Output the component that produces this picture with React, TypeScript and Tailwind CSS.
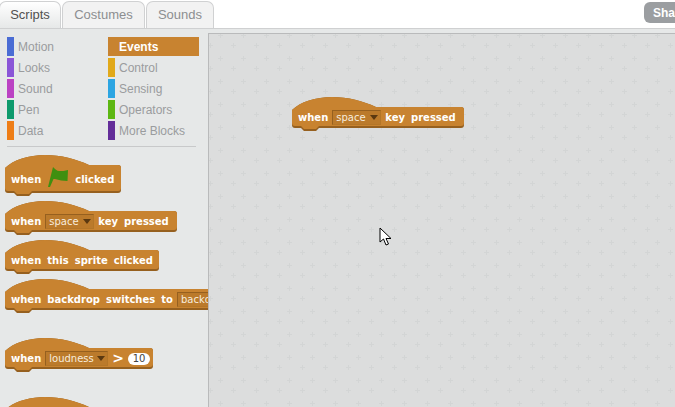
import React from "react";

function BlockShape({ w, h }: { w: number; h: number }) {
  const path = (b: number) =>
    `M0,13 C8,5 24,0 40,0 C56,0 71,4 84,10 H${w - 3} Q${w},10 ${w},13 V${b - 3} Q${w},${b} ${w - 3},${b} H27 L24,${b + 3} H12 L9,${b} H3 Q0,${b} 0,${b - 3} Z`;
  return (
    <svg className="absolute left-0 top-0" width={w} height={h + 4} viewBox={`0 0 ${w} ${h + 4}`}>
      <path d={path(h)} fill="#96601f" />
      <path d={path(h - 2)} fill="#c88330" />
    </svg>
  );
}

function Block({ w, h, className, children }: { w: number; h: number; className?: string; children?: React.ReactNode }) {
  return (
    <div className={`relative shrink-0 ${className ?? ""}`} style={{ width: w, height: h + 4 }}>
      <BlockShape w={w} h={h} />
      <div
        className="relative flex items-center whitespace-nowrap pl-[6px] font-['DejaVu_Sans',sans-serif] text-[10px] font-bold text-white [word-spacing:2.6px]"
        style={{ height: h - 2, paddingTop: 12 }}
      >
        {children}
      </div>
    </div>
  );
}

function Dropdown({ label, w }: { label: string; w: number }) {
  return (
    <span
      className="flex h-[15px] shrink-0 items-center justify-between border-l border-t border-b border-r border-t-[#96601f] border-l-[#96601f] border-b-[#b47628] border-r-[#b47628] bg-[#bb7a2b] pl-[3px] pr-[2px] font-['DejaVu_Sans',sans-serif] text-[10px] font-normal text-[#f7ecdd]"
      style={{ width: w }}
    >
      <span>{label}</span>
      <svg width="8" height="5" viewBox="0 0 8 5"><path d="M0,0 H8 L4,5 Z" fill="#5a3810" /></svg>
    </span>
  );
}

const cats: [string, string, string, string][] = [
  ["Motion", "#4a6cd4", "Events", "#c88330"],
  ["Looks", "#8a55d7", "Control", "#e1a91a"],
  ["Sound", "#bb42c3", "Sensing", "#2ca5e2"],
  ["Pen", "#0e9a6c", "Operators", "#5cb712"],
  ["Data", "#ee7d16", "More Blocks", "#632d99"],
];

function Cat({ name, color }: { name: string; color: string }) {
  if (name === "Events") {
    return (
      <div className="flex h-[19px] w-[91px] items-center bg-[#c88330] pl-[11px] text-[12px] font-bold text-white">
        {name}
      </div>
    );
  }
  return (
    <div className="flex h-[19px] w-[91px] items-center text-[12px] text-[#9a9c9e]">
      <span className="h-[19px] w-[7px] shrink-0" style={{ backgroundColor: color }} />
      <span className="ml-[4px] whitespace-nowrap">{name}</span>
    </div>
  );
}

function Tab({ label, w, active }: { label: string; w: number; active?: boolean }) {
  return (
    <div
      className={`flex h-[27px] items-center justify-center rounded-t-[7px] border border-b-0 border-[#d0d1d2] text-[13px] ${
        active ? "bg-gradient-to-b from-white to-[#e6e8e8] text-[#505050]" : "bg-[#f2f2f2] text-[#8c8e90]"
      }`}
      style={{ width: w }}
    >
      {label}
    </div>
  );
}

export default function App() {
  return (
    <div className="flex h-[407px] w-[675px] flex-col overflow-hidden bg-white font-['Liberation_Sans',sans-serif]">
      <div className="flex h-[29px] shrink-0 items-end justify-between border-b border-[#cfd0d1]">
        <div className="-ml-px flex gap-[1px]">
          <Tab label="Scripts" w={62} active />
          <Tab label="Costumes" w={83} />
          <Tab label="Sounds" w={68} />
        </div>
        <div className="mb-[5px] flex h-[21px] w-[31px] items-center overflow-hidden rounded-l-[6px] bg-[#9b9ea1] pl-[9px] text-[12px] font-bold text-white">
          Sha
        </div>
      </div>
      <div className="flex min-h-0 flex-1 bg-[#e6e8e8]">
        <div className="relative w-[208px] shrink-0 overflow-hidden">
          <div className="ml-[7px] mt-[8px] flex flex-col gap-[2px]">
            {cats.map((c) => (
              <div key={c[0]} className="flex gap-[10px]">
                <Cat name={c[0]} color={c[1]} />
                <Cat name={c[2]} color={c[3]} />
              </div>
            ))}
          </div>
          <div className="ml-[7px] mt-[6px] h-px w-[189px] bg-[#c8c9ca]" />
          <div className="ml-[5px] mt-[8px] flex flex-col">
            <Block w={116} h={38}>
              <span>when</span>
              <svg className="mx-[7px] mb-[4px]" width="20" height="20" viewBox="0 0 20 20">
                <path d="M5,0 C7,2 9,4 11,4 C14,4 17,4 20,3 L19.5,14 C15,14 11,13 7,12 L5.5,12 L2,20 L0,20 Z" fill="#3f8f10" />
              </svg>
              <span>clicked</span>
            </Block>
            <Block w={172} h={31} className="mt-[4px]">
              <span>when</span>
              <span className="mx-[4px]"><Dropdown label="space" w={49} /></span>
              <span>key pressed</span>
            </Block>
            <Block w={154} h={31} className="mt-[4px]">
              <span>when this sprite clicked</span>
            </Block>
            <Block w={230} h={31} className="mt-[4px]">
              <span>when backdrop switches to</span>
              <span className="ml-[4px]"><Dropdown label="backdrop1" w={70} /></span>
            </Block>
            <Block w={148} h={31} className="mt-[24px]">
              <span>when</span>
              <span className="mx-[4px]"><Dropdown label="loudness" w={63} /></span>
              <span className="text-[14px]">&gt;</span>
              <span className="ml-[4px] flex h-[12px] w-[22px] items-center justify-center rounded-full bg-white font-['DejaVu_Sans',sans-serif] text-[10px] font-normal text-[#444]">
                10
              </span>
            </Block>
            <Block w={120} h={31} className="mt-[24px]" />
          </div>
        </div>
        <div className="relative mt-[4px] flex-1 border-l border-t border-[#b9babb] bg-[#dcdddd]">
          <svg className="absolute inset-0 h-full w-full" aria-hidden="true">
            <defs>
              <pattern id="grid" x="-5" y="-5" width="23" height="23" patternUnits="userSpaceOnUse">
                <path d="M14,6.5 H19 M16.5,4 V9 M4,16.5 H9 M6.5,14 V19" stroke="#d3d5d5" strokeWidth="1" fill="none" />
              </pattern>
            </defs>
            <rect width="100%" height="100%" fill="url(#grid)" />
          </svg>
          <div className="absolute left-[83px] top-[63px]">
            <Block w={172} h={31}>
              <span>when</span>
              <span className="mx-[4px]"><Dropdown label="space" w={49} /></span>
              <span>key pressed</span>
            </Block>
          </div>
          <svg className="absolute left-[170px] top-[193px]" width="14" height="20" viewBox="0 0 14 20">
            <path d="M1,1 L1,15 L4.5,12 L7,18 L9.5,17 L7,11.5 L12,11.5 Z" fill="#fff" stroke="#000" strokeWidth="1" />
          </svg>
        </div>
      </div>
    </div>
  );
}
